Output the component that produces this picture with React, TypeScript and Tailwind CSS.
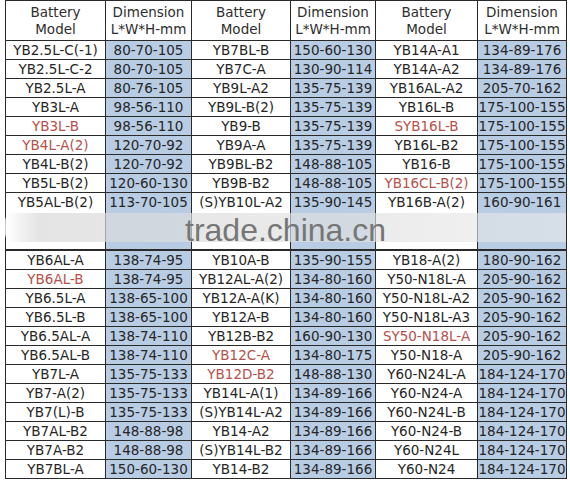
import React from "react";

type Row = [string, string, string, string, string, string];

const RED = new Set([
  "YB3L-B",
  "YB4L-A(2)",
  "SYB16L-B",
  "YB16CL-B(2)",
  "YB6AL-B",
  "YB12C-A",
  "YB12D-B2",
  "SY50-N18L-A",
]);

const top: Row[] = [
  ["YB2.5L-C(-1)", "80-70-105", "YB7BL-B", "150-60-130", "YB14A-A1", "134-89-176"],
  ["YB2.5L-C-2", "80-70-105", "YB7C-A", "130-90-114", "YB14A-A2", "134-89-176"],
  ["YB2.5L-A", "80-76-105", "YB9L-A2", "135-75-139", "YB16AL-A2", "205-70-162"],
  ["YB3L-A", "98-56-110", "YB9L-B(2)", "135-75-139", "YB16L-B", "175-100-155"],
  ["YB3L-B", "98-56-110", "YB9-B", "135-75-139", "SYB16L-B", "175-100-155"],
  ["YB4L-A(2)", "120-70-92", "YB9A-A", "135-75-139", "YB16L-B2", "175-100-155"],
  ["YB4L-B(2)", "120-70-92", "YB9BL-B2", "148-88-105", "YB16-B", "175-100-155"],
  ["YB5L-B(2)", "120-60-130", "YB9B-B2", "148-88-105", "YB16CL-B(2)", "175-100-155"],
  ["YB5AL-B(2)", "113-70-105", "(S)YB10L-A2", "135-90-145", "YB16B-A(2)", "160-90-161"],
];

const bottom: Row[] = [
  ["YB6AL-A", "138-74-95", "YB10A-B", "135-90-155", "YB18-A(2)", "180-90-162"],
  ["YB6AL-B", "138-74-95", "YB12AL-A(2)", "134-80-160", "Y50-N18L-A", "205-90-162"],
  ["YB6.5L-A", "138-65-100", "YB12A-A(K)", "134-80-160", "Y50-N18L-A2", "205-90-162"],
  ["YB6.5L-B", "138-65-100", "YB12A-B", "134-80-160", "Y50-N18L-A3", "205-90-162"],
  ["YB6.5AL-A", "138-74-110", "YB12B-B2", "160-90-130", "SY50-N18L-A", "205-90-162"],
  ["YB6.5AL-B", "138-74-110", "YB12C-A", "134-80-175", "Y50-N18-A", "205-90-162"],
  ["YB7L-A", "135-75-133", "YB12D-B2", "148-88-130", "Y60-N24L-A", "184-124-170"],
  ["YB7-A(2)", "135-75-133", "YB14L-A(1)", "134-89-166", "Y60-N24-A", "184-124-170"],
  ["YB7(L)-B", "135-75-133", "(S)YB14L-A2", "134-89-166", "Y60-N24L-B", "184-124-170"],
  ["YB7AL-B2", "148-88-98", "YB14-A2", "134-89-166", "Y60-N24-B", "184-124-170"],
  ["YB7A-B2", "148-88-98", "(S)YB14L-B2", "134-89-166", "Y60-N24L", "184-124-170"],
  ["YB7BL-A", "150-60-130", "YB14-B2", "134-89-166", "Y60-N24", "184-124-170"],
];

function DataRow({ row }: { row: Row }) {
  return (
    <>
      {row.map((t, i) => {
        const blue = i % 2 === 1;
        const red = RED.has(t);
        return (
          <div
            key={i}
            className={
              "h-[18px] leading-[18px] text-center whitespace-nowrap " +
              (blue ? "bg-[#b8cce4] " : "bg-white ") +
              (red ? "text-[#b5504a]" : "text-[#262626]")
            }
          >
            {t}
          </div>
        );
      })}
    </>
  );
}

function HeaderCell({ a, b }: { a: string; b: string }) {
  return (
    <div className="h-[39px] bg-white flex flex-col items-center justify-center leading-[17px] text-[#2e2e2e] whitespace-nowrap">
      <span>{a}</span>
      <span>{b}</span>
    </div>
  );
}

const gridCls =
  "grid grid-cols-[99px_85px_98px_84px_101px_88px] gap-px p-px bg-[#2a2a2a] w-[562px]";

export default function App() {
  return (
    <div
      className="relative w-[570px] h-[480px] bg-white overflow-hidden text-[13.5px]"
      style={{ fontFamily: '"DejaVu Sans", Verdana, sans-serif' }}
    >
      <div className="ml-[5px] flex flex-col">
        <div className={gridCls}>
          <HeaderCell a="Battery" b="Model" />
          <HeaderCell a="Dimension" b="L*W*H-mm" />
          <HeaderCell a="Battery" b="Model" />
          <HeaderCell a="Dimension" b="L*W*H-mm" />
          <HeaderCell a="Battery" b="Model" />
          <HeaderCell a="Dimension" b="L*W*H-mm" />
          {top.map((r, i) => (
            <DataRow key={i} row={r} />
          ))}
          {[0, 1, 2, 3, 4, 5].map((i) => (
            <div
              key={i}
              className={
                "h-[38px] mt-[-1px] " + (i % 2 === 1 ? "bg-[#b8cce4]" : "bg-white")
              }
            />
          ))}
        </div>
        <div className={gridCls}>
          {bottom.map((r, i) => (
            <DataRow key={i} row={r} />
          ))}
        </div>
      </div>

      {/* watermark */}
      <div className="absolute left-[5px] top-[213px] w-[561px] h-[29px] rounded-l-[8px] bg-[linear-gradient(90deg,rgba(255,255,255,0.75)_0%,rgba(218,218,218,0.72)_6%,rgba(224,224,224,0.66)_60%,rgba(234,234,234,0.6)_100%)]" />
      <div
        className="absolute left-[185px] top-[214px] text-[32px] leading-[32px] text-[#767676] whitespace-nowrap"
        style={{ fontFamily: '"Liberation Sans", Arial, sans-serif' }}
      >
        trade.china.cn
      </div>
    </div>
  );
}
